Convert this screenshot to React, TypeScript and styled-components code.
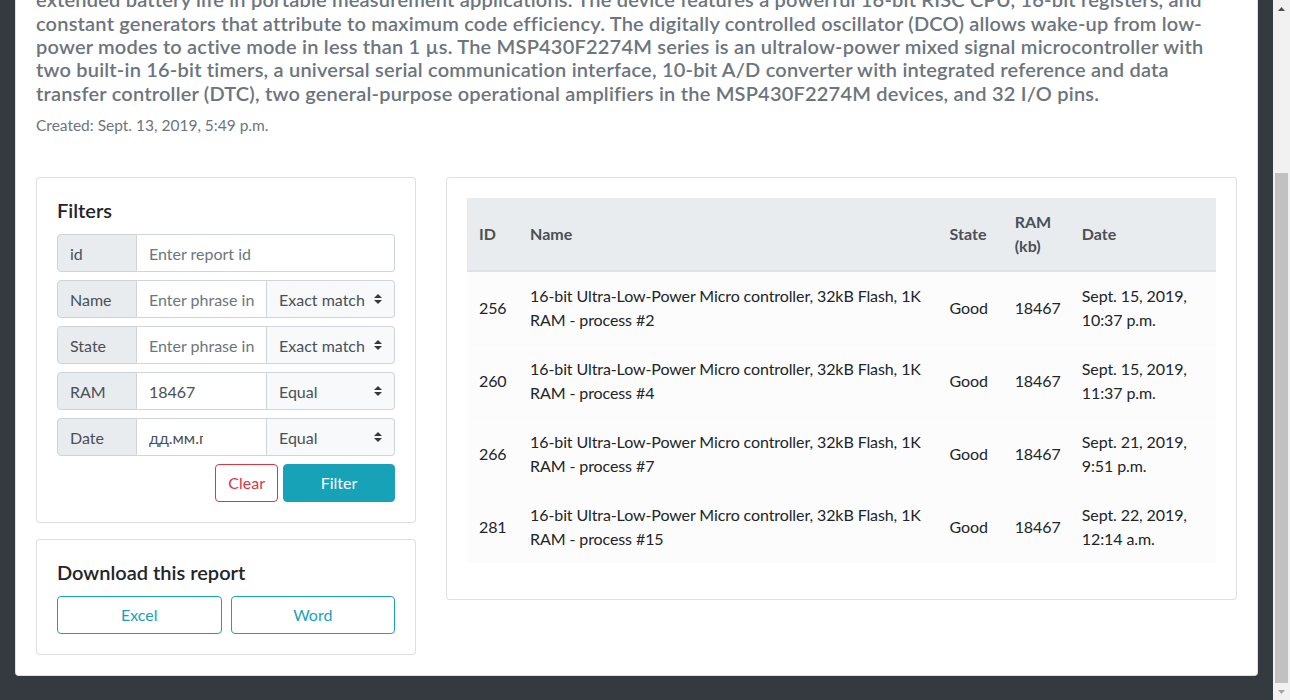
import React, { useLayoutEffect, useRef } from 'react';
import styled, { createGlobalStyle } from 'styled-components';

const GlobalStyle = createGlobalStyle`
  html, body {
    margin: 0;
    padding: 0;
    height: 100%;
    overflow: hidden;
  }
  body {
    background: #343a40;
    font-family: Lato, "Open Sans", sans-serif;
    color: #212529;
  }
  * {
    box-sizing: border-box;
  }
`;

const selectArrow = `url("data:image/svg+xml,%3csvg xmlns='http://www.w3.org/2000/svg' width='4' height='5' viewBox='0 0 4 5'%3e%3cpath fill='%23343a40' d='M2 0L0 2h4zm0 5L0 3h4z'/%3e%3c/svg%3e")`;

const Window = styled.div`
  display: flex;
  height: 100vh;
`;

const Viewport = styled.div`
  flex: 1;
  min-width: 0;
  overflow: hidden;
  background: #343a40;
`;

/* classic window scrollbar, page scrolled to the bottom */
const Rail = styled.div`
  flex: none;
  width: 17px;
  display: flex;
  flex-direction: column;
  background: #f1f1f1;
`;

const RailButton = styled.div`
  height: 17px;
  display: flex;
  align-items: center;
  justify-content: center;
`;

const Track = styled.div`
  flex: 1;
  display: flex;
  flex-direction: column;
  padding: 156px 2px 0;
`;

const Thumb = styled.div`
  flex: 1;
  background: #c1c1c1;
`;

const Shell = styled.div`
  padding: 15px 15px 24px;
`;

const Page = styled.main`
  background: #fff;
  border-radius: 4px;
  border: 1px solid rgba(0, 0, 0, 0.125);
  padding: 20px;
`;

const Title = styled.h2`
  margin: 0 0 8px;
  font-size: 32px;
  font-weight: 600;
  line-height: 1.2;
`;

const Meta = styled.div`
  font-size: 16px;
  line-height: 24px;
  color: #6c757d;
  margin-bottom: 16px;
  padding-bottom: 16px;
  border-bottom: 1px solid #e9ecef;
`;

const Lead = styled.p`
  margin: 0 0 10px;
  font-size: 20px;
  line-height: 23.4px;
  letter-spacing: 0.2px;
  font-weight: 600;
  color: #6c757d;
`;

const Created = styled.p`
  margin: 0 0 41px;
  font-size: 15.5px;
  line-height: 21px;
  color: #6c757d;
`;

const Columns = styled.div`
  display: grid;
  grid-template-columns: 380px 1fr;
  gap: 30px;
  align-items: start;
`;

const Side = styled.div`
  display: flex;
  flex-direction: column;
  gap: 16px;
`;

const Card = styled.section`
  border: 1px solid rgba(0, 0, 0, 0.125);
  border-radius: 4px;
  padding: 20px;
  background: #fff;
`;

const CardTitle = styled.h5`
  margin: 0 0 12px;
  font-size: 20px;
  line-height: 24px;
  font-weight: 600;
  color: #212529;
`;

const InputGroup = styled.div`
  display: flex;
  height: 38px;
  margin-bottom: 8px;
  font-size: 16px;
`;

const Addon = styled.span`
  flex: none;
  width: 80px;
  display: flex;
  align-items: center;
  padding: 0 12px;
  background: #e9ecef;
  border: 1px solid #ced4da;
  border-radius: 4px 0 0 4px;
  color: #495057;
`;

const TextInput = styled.input<{ $last?: boolean; $clipRight?: number }>`
  flex: 1 1 0;
  min-width: 0;
  height: 38px;
  padding: 6px ${(p) => p.$clipRight ?? 12}px 6px 12px;
  border: 1px solid #ced4da;
  border-left: 0;
  border-radius: ${(p) => (p.$last ? '0 4px 4px 0' : '0')};
  font: inherit;
  font-family: Lato, "Open Sans", sans-serif;
  color: #495057;
  background: #fff;
  outline: none;
  &::placeholder {
    color: #6c757d;
  }
`;

const Select = styled.select`
  flex: none;
  width: 128px;
  height: 38px;
  padding: 6px 28px 6px 12px;
  border: 1px solid #ced4da;
  border-left: 0;
  border-radius: 0 4px 4px 0;
  appearance: none;
  font: inherit;
  font-family: Lato, "Open Sans", sans-serif;
  color: #495057;
  background: #f8f9fa ${selectArrow} no-repeat right 12px center / 8px 10px;
  outline: none;
`;

const Actions = styled.div`
  display: flex;
  justify-content: flex-end;
  gap: 5px;
`;

const Button = styled.button<{ $tone: 'info' | 'outline-info' | 'outline-danger'; $width?: number }>`
  height: 38px;
  padding: 6px 12px;
  border-radius: 4px;
  font-family: Lato, "Open Sans", sans-serif;
  font-size: 16px;
  line-height: 24px;
  cursor: pointer;
  width: ${(p) => (p.$width ? `${p.$width}px` : 'auto')};
  border: 1px solid ${(p) => (p.$tone === 'outline-danger' ? '#dc3545' : '#17a2b8')};
  background: ${(p) => (p.$tone === 'info' ? '#17a2b8' : '#fff')};
  color: ${(p) => (p.$tone === 'info' ? '#fff' : p.$tone === 'outline-danger' ? '#dc3545' : '#17a2b8')};
`;

const DownloadRow = styled.div`
  display: grid;
  grid-template-columns: 1fr 1fr;
  gap: 9px;
`;

const Table = styled.table`
  width: 100%;
  border-collapse: collapse;
  table-layout: fixed;
  margin-bottom: 16px;
  font-size: 16px;
  line-height: 24px;
`;

const Th = styled.th`
  padding: 12px;
  text-align: left;
  vertical-align: middle;
  font-weight: 700;
  color: #495057;
  background: #e9ecef;
  border-bottom: 2px solid #dee2e6;
`;

const Row = styled.tr`
  background: #fcfcfc;
  & + & td {
    border-top: 1px solid #fafafa;
  }
`;

const Td = styled.td`
  padding: 12px;
  vertical-align: middle;
  color: #212529;
  letter-spacing: -0.1px;
`;

const reports = [
  { id: 256, process: 2, date: 'Sept. 15, 2019, 10:37 p.m.' },
  { id: 260, process: 4, date: 'Sept. 15, 2019, 11:37 p.m.' },
  { id: 266, process: 7, date: 'Sept. 21, 2019, 9:51 p.m.' },
  { id: 281, process: 15, date: 'Sept. 22, 2019, 12:14 a.m.' },
];

export default function App() {
  const ref = useRef<HTMLDivElement>(null);

  useLayoutEffect(() => {
    const toBottom = () => {
      if (ref.current) ref.current.scrollTop = ref.current.scrollHeight;
    };
    toBottom();
    document.fonts?.ready.then(toBottom);
  }, []);

  return (
    <>
      <GlobalStyle />
      <Window>
        <Viewport ref={ref}>
          <Shell>
            <Page>
              <Title>MSP430F2274M</Title>
              <Meta>Mixed Signal Microcontroller · Texas Instruments</Meta>
              <Lead>
                The Texas Instruments MSP430 family of ultra-low-power microcontrollers consists of several devices
                featuring different sets of peripherals targeted for various applications. The architecture, combined
                with five low-power modes, is optimized to achieve
                <br />
                extended battery life in portable measurement applications. The device features a powerful 16-bit RISC
                CPU, 16-bit registers, and
                <br />
                constant generators that attribute to maximum code efficiency. The digitally controlled oscillator (DCO)
                allows wake-up from low-
                <br />
                power modes to active mode in less than 1 µs. The MSP430F2274M series is an ultralow-power mixed signal
                microcontroller with
                <br />
                two built-in 16-bit timers, a universal serial communication interface, 10-bit A/D converter with
                integrated reference and data
                <br />
                transfer controller (DTC), two general-purpose operational amplifiers in the MSP430F2274M devices, and
                32 I/O pins.
              </Lead>
              <Created>Created: Sept. 13, 2019, 5:49 p.m.</Created>

              <Columns>
                <Side>
                  <Card>
                    <CardTitle>Filters</CardTitle>
                    <InputGroup>
                      <Addon>id</Addon>
                      <TextInput $last placeholder="Enter report id" />
                    </InputGroup>
                    <InputGroup>
                      <Addon>Name</Addon>
                      <TextInput placeholder="Enter phrase in name" />
                      <Select defaultValue="exact">
                        <option value="exact">Exact match</option>
                        <option value="contains">Contains</option>
                      </Select>
                    </InputGroup>
                    <InputGroup>
                      <Addon>State</Addon>
                      <TextInput placeholder="Enter phrase in state" />
                      <Select defaultValue="exact">
                        <option value="exact">Exact match</option>
                        <option value="contains">Contains</option>
                      </Select>
                    </InputGroup>
                    <InputGroup>
                      <Addon>RAM</Addon>
                      <TextInput defaultValue="18467" />
                      <Select defaultValue="eq">
                        <option value="eq">Equal</option>
                        <option value="gt">Greater</option>
                        <option value="lt">Less</option>
                      </Select>
                    </InputGroup>
                    <InputGroup>
                      <Addon>Date</Addon>
                      <TextInput readOnly $clipRight={63} defaultValue="дд.мм.гггг" />
                      <Select defaultValue="eq">
                        <option value="eq">Equal</option>
                        <option value="gt">After</option>
                        <option value="lt">Before</option>
                      </Select>
                    </InputGroup>
                    <Actions>
                      <Button $tone="outline-danger">Clear</Button>
                      <Button $tone="info" $width={112}>
                        Filter
                      </Button>
                    </Actions>
                  </Card>

                  <Card>
                    <CardTitle>Download this report</CardTitle>
                    <DownloadRow>
                      <Button $tone="outline-info">Excel</Button>
                      <Button $tone="outline-info">Word</Button>
                    </DownloadRow>
                  </Card>
                </Side>

                <Card>
                  <Table>
                    <colgroup>
                      <col style={{ width: 51 }} />
                      <col style={{ width: 419 }} />
                      <col style={{ width: 65 }} />
                      <col style={{ width: 67 }} />
                      <col style={{ width: 146 }} />
                    </colgroup>
                    <thead>
                      <tr>
                        <Th>ID</Th>
                        <Th>Name</Th>
                        <Th>State</Th>
                        <Th>RAM (kb)</Th>
                        <Th>Date</Th>
                      </tr>
                    </thead>
                    <tbody>
                      {reports.map((r) => (
                        <Row key={r.id}>
                          <Td>{r.id}</Td>
                          <Td>16-bit Ultra-Low-Power Micro controller, 32kB Flash, 1K RAM - process #{r.process}</Td>
                          <Td>Good</Td>
                          <Td>18467</Td>
                          <Td>{r.date}</Td>
                        </Row>
                      ))}
                    </tbody>
                  </Table>
                </Card>
              </Columns>
            </Page>
          </Shell>
        </Viewport>

        <Rail>
          <RailButton>
            <svg width="7" height="4" viewBox="0 0 7 4">
              <path d="M3.5 0L7 4H0z" fill="#505050" />
            </svg>
          </RailButton>
          <Track>
            <Thumb />
          </Track>
          <RailButton>
            <svg width="7" height="4" viewBox="0 0 7 4">
              <path d="M0 0h7L3.5 4z" fill="#a3a3a3" />
            </svg>
          </RailButton>
        </Rail>
      </Window>
    </>
  );
}
